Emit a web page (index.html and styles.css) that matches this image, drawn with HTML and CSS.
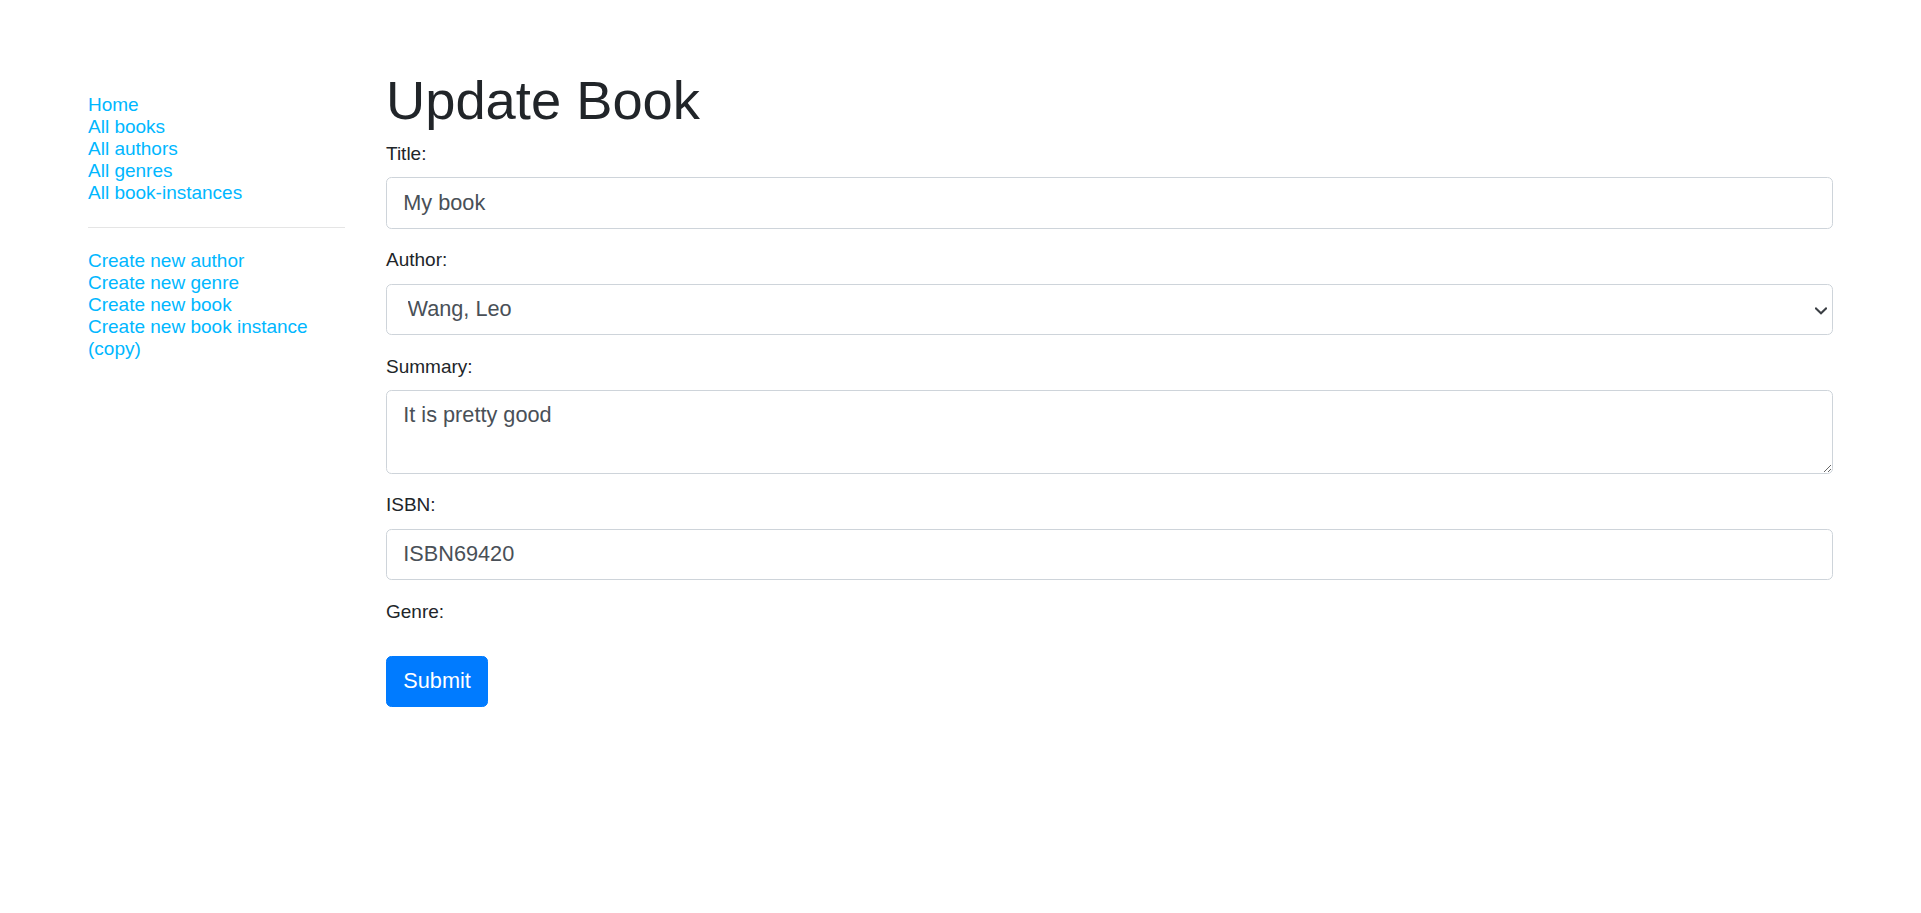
FILE: index.html
```html
<!DOCTYPE html>
<html lang="en">
<head>
<meta charset="utf-8">
<title>Update Book</title>
<link rel="stylesheet" href="styles.css">
</head>
<body>
<div class="page">
  <nav class="sidebar">
    <ul class="sidebar-nav">
      <li><a href="#">Home</a></li>
      <li><a href="#">All books</a></li>
      <li><a href="#">All authors</a></li>
      <li><a href="#">All genres</a></li>
      <li><a href="#">All book-instances</a></li>
      <li><hr class="divider"></li>
      <li><a href="#">Create new author</a></li>
      <li><a href="#">Create new genre</a></li>
      <li><a href="#">Create new book</a></li>
      <li><a href="#">Create new book instance (copy)</a></li>
    </ul>
  </nav>
  <main class="content">
    <h1 class="title">Update Book</h1>
    <form class="book-form">
      <div class="form-group">
        <label class="form-label" for="title">Title:</label>
        <input class="form-control" id="title" type="text" value="My book">
      </div>
      <div class="form-group">
        <label class="form-label" for="author">Author:</label>
        <div class="select-wrap">
          <select class="form-control form-select" id="author">
            <option selected>Wang, Leo</option>
          </select>
          <svg class="select-arrow" width="12" height="8" viewBox="0 0 12 8" aria-hidden="true">
            <polyline points="1,1.5 6,6.3 11,1.5" fill="none" stroke="#3b3f44" stroke-width="2" stroke-linecap="square"/>
          </svg>
        </div>
      </div>
      <div class="form-group">
        <label class="form-label" for="summary">Summary:</label>
        <textarea class="form-control form-textarea" id="summary" rows="2">It is pretty good</textarea>
      </div>
      <div class="form-group">
        <label class="form-label" for="isbn">ISBN:</label>
        <input class="form-control" id="isbn" type="text" value="ISBN69420">
      </div>
      <div class="form-group">
        <label class="form-label">Genre:</label>
        <div class="genre-list"></div>
      </div>
      <button class="btn-primary" type="submit">Submit</button>
    </form>
  </main>
</div>
</body>
</html>
```
FILE: styles.css
```css
html, body {
  margin: 0;
  padding: 0;
  background: #ffffff;
}

body {
  font-family: "Liberation Sans", Arial, Helvetica, sans-serif;
  font-size: 19px;
  color: #212529;
}

.page {
  display: flex;
  gap: 41px;
  padding: 68px 88px;
}

.sidebar {
  flex: 0 0 257px;
}

.sidebar-nav {
  list-style: none;
  margin: 26px 0 0;
  padding: 0;
}

.sidebar-nav a {
  color: #00b7ff;
  text-decoration: none;
}

.divider {
  margin: 22.5px 0;
  border: 0;
  border-top: 1px solid rgba(0, 0, 0, 0.1);
  height: 0;
}

.content {
  flex: 1 1 auto;
  min-width: 0;
}

.title {
  margin: 0 0 9.5px;
  font-size: 54.3px;
  font-weight: 500;
  line-height: 1.2;
  color: #212529;
}

.form-group {
  margin-bottom: 20.5px;
}

.form-label {
  display: inline-block;
  margin-bottom: 12.5px;
}

.form-control {
  display: block;
  box-sizing: border-box;
  width: 100%;
  height: 51.6px;
  padding: 8.1px 16.3px;
  font-family: "Liberation Sans", Arial, Helvetica, sans-serif;
  font-size: 21.7px;
  line-height: 1.5;
  color: #495057;
  background: #ffffff;
  border: 1px solid #ced4da;
  border-radius: 5.4px;
  margin: 0;
}

.select-wrap {
  position: relative;
}

.form-select {
  -webkit-appearance: none;
  appearance: none;
  padding-left: 20.5px;
  padding-right: 30px;
}

.select-arrow {
  position: absolute;
  right: 6px;
  top: 50%;
  margin-top: -3px;
  pointer-events: none;
}

.form-textarea {
  height: auto;
  resize: vertical;
}

.genre-list {
  min-height: 0;
}

.btn-primary {
  display: inline-block;
  box-sizing: border-box;
  height: 51.6px;
  padding: 8.1px 16.3px;
  font-family: "Liberation Sans", Arial, Helvetica, sans-serif;
  font-size: 21.7px;
  line-height: 1.5;
  color: #ffffff;
  background: #007bff;
  border: 1px solid #007bff;
  border-radius: 5.4px;
  cursor: pointer;
}
```
